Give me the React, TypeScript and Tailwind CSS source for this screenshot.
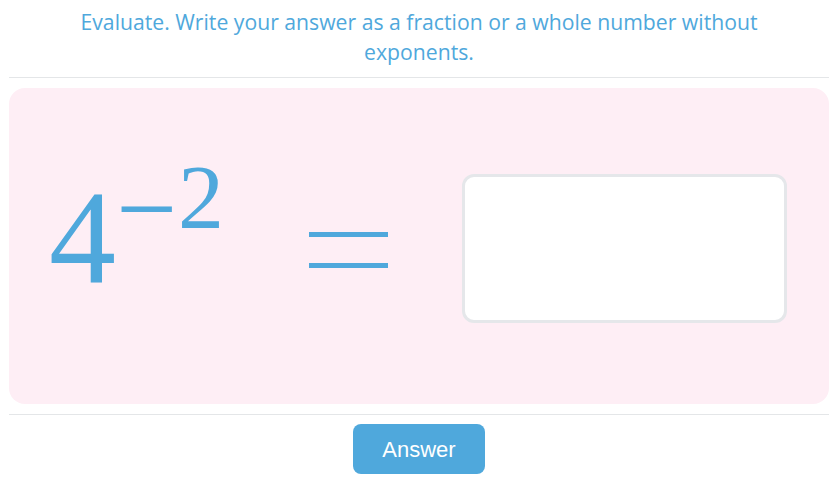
import React from 'react';

export default function App() {
  return (
    <div className="min-h-screen w-full bg-white">
      <div className="ml-[9px] w-[820px]">
        {/* Prompt */}
        <div className="border-b border-[#e4e6e8] pt-[7px] pb-[10px] text-center font-['Open_Sans',sans-serif] text-[21.2px] font-medium leading-[30px] text-[#4fa8dc]">
          Evaluate. Write your answer as a fraction or a whole number without
          <br />
          exponents.
        </div>

        {/* Question panel */}
        <div className="mt-[10px] flex h-[316px] items-center rounded-[16px] bg-[#feeef5] pl-[40px] pr-[42px]">
          <div className="mb-[18px] flex w-[190px] items-baseline whitespace-nowrap font-['Liberation_Serif',serif] leading-none text-[#4fa8dc]">
            <span className="text-[134px]">4</span>
            <span className="relative -top-[37px] mr-[1px] text-[108px]">−</span>
            <span className="relative -top-[54px] text-[92px]">2</span>
          </div>
          <div className="ml-[70px] mt-[8px] flex flex-col gap-[26px]">
            <div className="h-[5px] w-[79px] bg-[#4fa8dc]" />
            <div className="h-[5px] w-[79px] bg-[#4fa8dc]" />
          </div>
          <input
            type="text"
            aria-label="Answer"
            className="ml-auto mt-[5px] h-[149px] w-[325px] rounded-[12px] border-[3px] border-[#e5e7ea] bg-white outline-none"
          />
        </div>

        {/* Actions */}
        <div className="mt-[10px] flex justify-center border-t border-[#e4e6e8] pt-[9px]">
          <button className="h-[50px] w-[132px] rounded-[8px] bg-[#4fa8dc] font-['Liberation_Sans',sans-serif] text-[22px] text-white">
            Answer
          </button>
        </div>
      </div>
    </div>
  );
}
